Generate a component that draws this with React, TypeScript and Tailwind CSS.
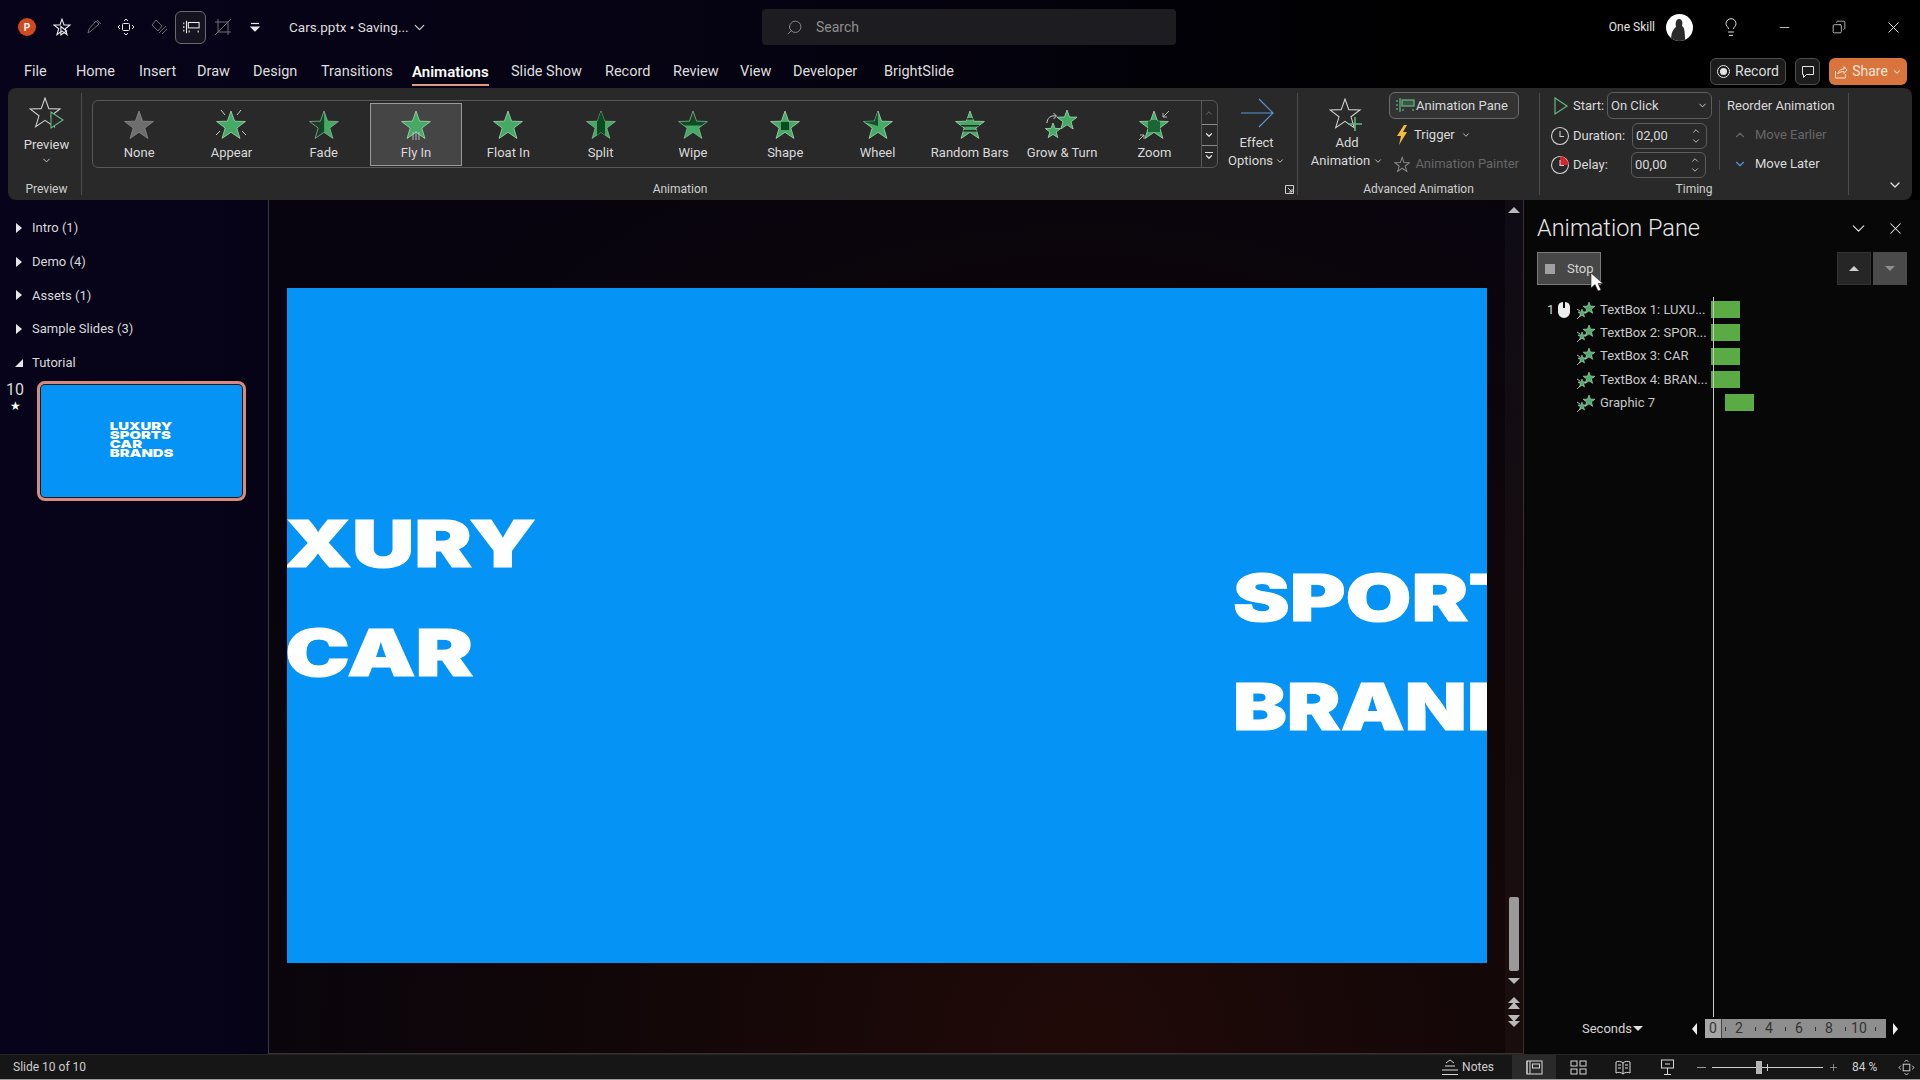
import React from 'react';
import { ChevronDown, ChevronUp, Lightbulb, Minus, Search, Copy, X, Plus } from 'lucide-react';

const tabs = [
  { label: 'File', w: 'w-[52px]' },
  { label: 'Home', w: 'w-[63px]' },
  { label: 'Insert', w: 'w-[58px]' },
  { label: 'Draw', w: 'w-[56px]' },
  { label: 'Design', w: 'w-[68px]' },
  { label: 'Transitions', w: 'w-[91px]' },
  { label: 'Animations', w: 'w-[99px]', active: true },
  { label: 'Slide Show', w: 'w-[94px]' },
  { label: 'Record', w: 'w-[68px]' },
  { label: 'Review', w: 'w-[67px]' },
  { label: 'View', w: 'w-[53px]' },
  { label: 'Developer', w: 'w-[91px]' },
  { label: 'BrightSlide', w: 'w-[80px]' },
];

const STAR = '16,2 19.6,12.2 30.4,12.5 21.8,19 24.9,29.4 16,23.3 7.1,29.4 10.2,19 1.6,12.5 12.4,12.2';

const gallery = [
  { label: 'None', kind: 'none' },
  { label: 'Appear', kind: 'appear' },
  { label: 'Fade', kind: 'fade' },
  { label: 'Fly In', kind: 'fly', selected: true },
  { label: 'Float In', kind: 'float' },
  { label: 'Split', kind: 'split' },
  { label: 'Wipe', kind: 'wipe' },
  { label: 'Shape', kind: 'shape' },
  { label: 'Wheel', kind: 'wheel' },
  { label: 'Random Bars', kind: 'bars' },
  { label: 'Grow & Turn', kind: 'grow' },
  { label: 'Zoom', kind: 'zoom' },
];

const StarIcon = ({ kind }: { kind: string }) => {
  const clip = `clip-${kind}`;
  if (kind === 'grow') {
    return (
      <svg width="38" height="32" viewBox="0 0 38 32" fill="none">
        <polygon points="24,1 26.5,8 34,8.2 28,12.8 30.2,20 24,15.8 17.8,20 20,12.8 14,8.2 21.5,8" fill="#47a966" stroke="#a5dcb2" strokeWidth="0.8" />
        <polygon points="10,14 12,19.4 17.6,19.6 13.2,23 14.8,28.6 10,25.4 5.2,28.6 6.8,23 2.4,19.6 8,19.4" fill="#47a966" stroke="#a5dcb2" strokeWidth="0.8" />
        <path d="M4 14c0-5 4-8 9-7M10.500 4l3 3-3 3" stroke="#cfcfcf" strokeWidth="1" />
      </svg>
    );
  }
  return (
    <svg width="32" height="32" viewBox="0 0 32 32" fill="none">
      <defs>
        <clipPath id={clip}><polygon points={STAR} /></clipPath>
        <linearGradient id={`${clip}-h`} x1="0" x2="1" y1="0" y2="0">
          <stop offset="0" stopColor="#2a2f2b" />
          <stop offset="0.3" stopColor="#1f3a28" />
          <stop offset="0.5" stopColor="#0b4f22" />
          <stop offset="0.52" stopColor="#47a966" />
        </linearGradient>
        <linearGradient id={`${clip}-v`} x1="0" x2="0" y1="0" y2="1">
          <stop offset="0" stopColor="#2a2f2b" />
          <stop offset="0.5" stopColor="#0b4f22" />
          <stop offset="0.56" stopColor="#47a966" />
        </linearGradient>
      </defs>
      <polygon
        points={STAR}
        fill={kind === 'none' ? '#6e6e6e' : kind === 'fade' ? `url(#${clip}-h)` : kind === 'wipe' ? `url(#${clip}-v)` : '#47a966'}
        stroke={kind === 'none' ? '#8a8a8a' : kind === 'fade' || kind === 'wipe' || kind === 'split' ? '#7fb890' : '#a5dcb2'}
        strokeWidth="0.8"
      />
      <g clipPath={`url(#${clip})`}>
        {kind === 'split' && <rect x="12" y="0" width="8" height="32" fill="#0c4a22" />}
        {kind === 'shape' && <rect x="12" y="13" width="8" height="8" fill="#0c4a22" />}
        {kind === 'wheel' && <polygon points="16,17 16,0 4,6 2,13" fill="#16502b" />}
        {kind === 'zoom' && <rect x="10" y="11" width="12" height="12" fill="#1c6636" />}
        {kind === 'bars' && (
          <g fill="#2a2a2a">
            <rect x="0" y="9" width="32" height="1.600" />
            <rect x="0" y="16" width="32" height="1.600" />
            <rect x="0" y="21" width="32" height="1.600" />
          </g>
        )}
      </g>
      {kind === 'appear' && (
        <path d="M6 1l4 5M26 1l-4 5M1 26l4-4M31 26l-4-4" stroke="#c8c8c8" strokeWidth="1" />
      )}
      {kind === 'fly' && (
        <path d="M13 23v8M16 22v9M19 23v8" stroke="#c8c8c8" strokeWidth="0.9" />
      )}
      {kind === 'zoom' && (
        <path d="M31 2l-6 6M25 4v4h4M1 31l5-5M6 30v-4H2" stroke="#c8c8c8" strokeWidth="0.9" />
      )}
    </svg>
  );
};

// small twin stars beside each row of the pane
const PaneStar = () => (
  <svg width="20" height="20" viewBox="0 0 20 20" fill="none">
    <polygon points="13,2 14.500,6 19,6.200 15.500,9 16.700,13.400 13,10.900 9.300,13.400 10.500,9 7,6.200 11.500,6" fill="#4fae70" stroke="#bfe6c9" strokeWidth="0.5" />
    <polygon points="6,9 7,11.800 10,12 7.700,13.800 8.500,17 6,15.200 3.500,17 4.300,13.800 2,12 5,11.800" fill="#4fae70" stroke="#bfe6c9" strokeWidth="0.5" />
    <path d="M1 19l3-3M4 11L1 9" stroke="#d8d8d8" strokeWidth="0.8" />
  </svg>
);

const OutlineStar = ({ children }: { children: React.ReactNode }) => (
  <svg width="36" height="34" viewBox="0 0 36 34" fill="none" stroke="#cfcfcf" strokeWidth="1.100">
    <polygon points="16,1 19.800,11.600 31,11.900 22,18.800 25.300,29.600 16,23.300 6.700,29.600 10,18.800 1,11.900 12.200,11.600" />
    {children}
  </svg>
);

const AnimPaneGlyph = () => (
  <svg width="20" height="16" viewBox="0 0 20 16" fill="none" stroke="#63b981" strokeWidth="1.200">
    <path d="M2 3v2M2 7v2M2 11v2M5 1v14" />
    <rect x="7" y="3" width="12" height="6" fill="#63b981" fillOpacity="0.25" />
    <path d="M8 12v2M18 12v2" />
  </svg>
);

const Spin = () => (
  <div className="flex flex-col items-center text-[#d0d0d0]">
    <ChevronUp size={10} strokeWidth={2} />
    <ChevronDown size={10} strokeWidth={2} />
  </div>
);

const Separator = () => <div className="w-px h-[102px] mt-[5px] bg-[#4b4b4b] shrink-0" />;

const GroupLabel = ({ children, className }: { children: React.ReactNode; className?: string }) => (
  <div className={`h-[22px] flex items-center justify-center text-[12px] text-[#cfcfcf] ${className ?? ''}`}>{children}</div>
);

const Ribbon = () => (
  <div className="mx-2 h-[112px] rounded-lg bg-[#292929] flex text-[13px] text-[#dadada] shrink-0">
    {/* Preview */}
    <div className="w-[73px] pl-[4px] flex flex-col shrink-0">
      <div className="h-[90px] flex flex-col items-center pt-[9px]">
        <svg width="36" height="34" viewBox="0 0 36 34" fill="none" stroke="#cfcfcf" strokeWidth="1.100">
          <polygon points="16,1 19.800,11.600 31,11.900 22,18.800 25.300,29.600 16,23.300 6.700,29.600 10,18.800 1,11.900 12.200,11.600" />
          <polygon points="22,15 34,23 22,31" fill="#292929" stroke="#63b981" />
        </svg>
        <span className="leading-[18px] mt-[5px]">Preview</span>
        <ChevronDown size={11} className="mt-[1px]" />
      </div>
      <GroupLabel>Preview</GroupLabel>
    </div>
    <Separator />

    {/* Animation */}
    <div className="w-[1215px] flex flex-col shrink-0 relative">
      <div className="h-[90px] flex pt-[12px]">
        <div className="ml-[10px] h-[68px] flex border border-[#585858] rounded-md">
          {gallery.map((g) => (
            <div
              key={g.label}
              className={
                g.selected
                  ? 'w-[92.300px] flex flex-col items-center pt-[5px] mt-[2px] h-[63px] bg-[#454545] border border-[#9a9a9a]'
                  : 'w-[92.300px] flex flex-col items-center pt-[6px] mt-[2px] h-[63px]'
              }
            >
              <div className="h-[32px] flex items-center justify-center"><StarIcon kind={g.kind} /></div>
              <span className="leading-[18px] mt-[3px] whitespace-nowrap text-[13px]">{g.label}</span>
            </div>
          ))}
          <div className="w-[16px] flex flex-col border-l border-[#585858] text-[#777]">
            <div className="h-[23px] flex items-center justify-center"><ChevronUp size={10} /></div>
            <div className="h-[22px] flex items-center justify-center border-y border-[#8a8a8a] text-[#dcdcdc]"><ChevronDown size={10} strokeWidth={3} /></div>
            <div className="flex-1 flex flex-col items-center justify-center text-[#dcdcdc]">
              <div className="w-[8px] h-px bg-[#dcdcdc] mb-[1px]" />
              <ChevronDown size={10} strokeWidth={3} className="-mt-[2px]" />
            </div>
          </div>
        </div>
        <div className="w-[74px] flex flex-col items-center -mt-[2px] ml-[2px]">
          <svg width="34" height="30" viewBox="0 0 34 30" fill="none" stroke="#5a97d6" strokeWidth="1.200">
            <path d="M1 15h32M19 1l14 14-14 14" />
          </svg>
          <span className="leading-[18px] mt-[6px]">Effect</span>
          <span className="leading-[18px] flex items-center gap-[2px]">Options <ChevronDown size={10} /></span>
        </div>
      </div>
      <GroupLabel className="pr-[19px]">Animation</GroupLabel>
      <svg className="absolute right-[3px] bottom-[6px]" width="9" height="9" viewBox="0 0 9 9" fill="none" stroke="#cfcfcf">
        <path d="M.5 8.500v-8h8v8zM3 3l4 4M7 4v3H4" />
      </svg>
    </div>
    <Separator />

    {/* Advanced Animation */}
    <div className="w-[241px] flex flex-col shrink-0">
      <div className="h-[90px] flex">
        <div className="w-[91px] pl-[7px] flex flex-col items-center pt-[10px] shrink-0">
          <OutlineStar>
            <path d="M19 26h14M26 19v14" stroke="#63b981" strokeWidth="1.500" />
          </OutlineStar>
          <span className="leading-[18px] mt-[2px]">Add</span>
          <span className="leading-[18px] flex items-center gap-[3px] whitespace-nowrap">Animation <ChevronDown size={10} /></span>
        </div>
        <div className="w-[130px] pt-[4px] flex flex-col shrink-0">
          <div className="h-[27px] flex items-center gap-[1px] pl-[5px] border border-[#6c6c6c] rounded-md bg-[#333333] whitespace-nowrap">
            <AnimPaneGlyph />Animation Pane
          </div>
          <div className="h-[32px] flex items-center gap-[6px] pl-[7px]">
            <svg width="12" height="20" viewBox="0 0 12 20" fill="#f3bd3f"><polygon points="8,0 1,11 5,11 3,20 11,7 7,7 11,0" /></svg>
            Trigger <ChevronDown size={10} />
          </div>
          <div className="h-[28px] flex items-center gap-[5px] pl-[5px] text-[#676767] whitespace-nowrap">
            <svg width="17" height="17" viewBox="0 0 32 32" fill="none" stroke="#8a8a8a" strokeWidth="2"><polygon points={STAR} /></svg>
            Animation Painter
          </div>
        </div>
      </div>
      <GroupLabel>Advanced Animation</GroupLabel>
    </div>
    <Separator />

    {/* Timing */}
    <div className="w-[308px] flex flex-col shrink-0">
      <div className="h-[90px] flex">
        <div className="w-[179px] pt-[4px] pl-[10px] flex flex-col shrink-0">
          <div className="h-[27px] flex items-center">
            <svg className="w-[20px]" width="20" height="20" viewBox="0 0 20 20" fill="none" stroke="#63b981" strokeWidth="1.200"><path d="M5 2l12 8-12 8z" /></svg>
            <span className="ml-[3px] w-[34px]">Start:</span>
            <div className="w-[105px] h-[27px] flex items-center justify-between px-[3px] border border-[#5c5c5c] rounded-md">On Click <ChevronDown size={11} /></div>
          </div>
          <div className="h-[26px] mt-[4px] flex items-center">
            <svg width="20" height="20" viewBox="0 0 20 20" fill="none" stroke="#cfcfcf" strokeWidth="1.100"><circle cx="10" cy="10" r="8.500" /><path d="M10 5v5.500h4" /></svg>
            <span className="ml-[3px] w-[59px]">Duration:</span>
            <div className="w-[75px] h-[26px] flex items-center justify-between pl-[3px] pr-[5px] border border-[#5c5c5c] rounded-md">02,00 <Spin /></div>
          </div>
          <div className="h-[26px] mt-[3px] flex items-center">
            <svg width="20" height="20" viewBox="0 0 20 20" fill="none" stroke="#cfcfcf" strokeWidth="1.100"><circle cx="10" cy="10" r="8.500" /><path d="M10 10V1.500a8.500 8.500 0 0 1 8.500 8.500z" fill="#d8232a" stroke="none" /><path d="M10 5v5.500h4" /></svg>
            <span className="ml-[3px] w-[58px]">Delay:</span>
            <div className="w-[75px] h-[26px] flex items-center justify-between pl-[3px] pr-[5px] border border-[#5c5c5c] rounded-md">00,00 <Spin /></div>
          </div>
        </div>
        <div className="w-px h-[70px] mt-[12px] bg-[#4b4b4b] shrink-0" />
        <div className="pl-[7px] pt-[9px] flex flex-col whitespace-nowrap">
          <div className="h-[18px] flex items-center">Reorder Animation</div>
          <div className="h-[30px] mt-[6px] flex items-center gap-[8px] pl-[6px] text-[#676767]"><ChevronUp size={14} />Move Earlier</div>
          <div className="h-[30px] mt-[1px] flex items-center gap-[8px] pl-[6px]"><ChevronDown size={14} className="text-[#5a97d6]" />Move Later</div>
        </div>
      </div>
      <GroupLabel>Timing</GroupLabel>
    </div>
    <Separator />
    <div className="flex-1 flex items-end justify-end pr-[9px] pb-[7px]"><ChevronDown size={16} /></div>
  </div>
);

const Header = () => (
  <>
    <div className="h-[54px] flex items-center shrink-0">
      <div className="w-[762px] flex items-center shrink-0 pl-[18px]">
        <div className="w-[18px] h-[18px] rounded-full bg-[#d2491f] flex items-center justify-center text-[10px] font-bold text-white shrink-0">P</div>
        <div className="ml-[10px] flex items-center">
          <div className="w-[32px] h-[33px] flex items-center justify-center text-[#e8e8e8]">
            <svg width="18" height="18" viewBox="0 0 32 32" fill="none" stroke="currentColor" strokeWidth="2"><polygon points={STAR} /><path d="M14 15l10 8-10 7z" /></svg>
          </div>
          <div className="w-[32px] h-[33px] flex items-center justify-center">
            <svg width="18" height="18" viewBox="0 0 18 18" fill="none" stroke="#6e6e6e"><path d="M3 15l1-4 7-8 3 3-8 7zM12 2l4 4" /></svg>
          </div>
          <div className="w-[32px] h-[33px] flex items-center justify-center">
            <svg width="18" height="18" viewBox="0 0 18 18" fill="none" stroke="#e8e8e8"><rect x="5.500" y="5.500" width="7" height="7" rx="1" /><path d="M7 3l2-2 2 2M7 15l2 2 2-2M3 7L1 9l2 2M15 7l2 2-2 2" /></svg>
          </div>
          <div className="w-[33px] h-[33px] flex items-center justify-center">
            <svg width="18" height="18" viewBox="0 0 18 18" fill="none" stroke="#6e6e6e"><path d="M2 7l4-5 6 6-4 5zM9 15l7-7M12 16l5-5" /></svg>
          </div>
          <div className="w-[31px] h-[33px] flex items-center justify-center border border-[#6a6a6a] rounded-md bg-[#15131f]">
            <svg width="18" height="16" viewBox="0 0 20 16" fill="none" stroke="#e8e8e8" strokeWidth="1.200"><path d="M2 3v2M2 7v2M2 11v2M5 1v14" /><rect x="7" y="3" width="12" height="6" /><path d="M8 12v2M18 12v2" /></svg>
          </div>
          <div className="w-[33px] h-[33px] flex items-center justify-center">
            <svg width="18" height="18" viewBox="0 0 18 18" fill="none" stroke="#6e6e6e"><path d="M4 1v13h13M1 4h13v13M1 17L17 1" /></svg>
          </div>
          <div className="w-[32px] h-[33px] flex items-center justify-center">
            <svg width="10" height="10" viewBox="0 0 10 10" fill="none" stroke="#e8e8e8" strokeWidth="1.200"><path d="M1 1.500h8" /><path d="M1 5h8L5 9z" fill="#e8e8e8" /></svg>
          </div>
        </div>
        <div className="ml-[18px] flex items-center gap-[2px] text-[13.500px] text-[#dedede] whitespace-nowrap">
          Cars.pptx&nbsp;•&nbsp;Saving... <ChevronDown size={17} strokeWidth={1.500} />
        </div>
      </div>
      <div className="w-[414px] h-[36px] rounded-[4px] bg-[#1d1c20] flex items-center pl-[24px] gap-[13px] text-[14px] text-[#8f8f8f] shrink-0">
        <Search size={17} strokeWidth={1.300} className="-scale-x-100" />Search
      </div>
      <div className="flex-1 flex items-center justify-end text-[#e4e4e4]">
        <span className="text-[12px] whitespace-nowrap">One Skill</span>
        <div className="ml-[11px] w-[27px] h-[27px] rounded-full bg-white overflow-hidden">
          <svg width="27" height="27" viewBox="0 0 27 27"><path d="M5 27c0-8 2-12 5-14-1-4 0-8 3-8s4 3 3 7c2 1 3 4 3 15z" fill="#2a2a2a" /></svg>
        </div>
        <Lightbulb size={20} strokeWidth={1.200} className="ml-[28px]" />
        <Minus size={15} strokeWidth={1.300} className="ml-[36px]" />
        <Copy size={14} strokeWidth={1.300} className="ml-[40px] -scale-x-100" />
        <X size={19} strokeWidth={1.200} className="ml-[38px] mr-[17px]" />
      </div>
    </div>
    <div className="h-[34px] flex pl-[24px] pr-[13px] pt-[2px] items-center text-[14.500px] text-[#dedede] shrink-0">
      {tabs.map((t) => (
        <div key={t.label} className={`${t.w} shrink-0 whitespace-nowrap`}>
          <span className={t.active ? 'inline-block text-[15px] font-semibold text-white border-b-2 border-[#dd9a80] pb-[1px] mt-[3px]' : ''}>{t.label}</span>
        </div>
      ))}
      <div className="ml-auto flex items-center h-[27px] text-[14px] -mt-[1px]">
        <div className="w-[76px] h-[27px] flex items-center justify-center gap-[5px] border border-[#4e4e4e] rounded-md bg-[#1c1c1c]">
          <span className="w-[13px] h-[13px] rounded-full border border-[#e4e4e4] flex items-center justify-center"><span className="w-[7px] h-[7px] rounded-full bg-[#e4e4e4]" /></span>
          Record
        </div>
        <div className="ml-[9px] w-[25px] h-[27px] flex items-center justify-center border border-[#4e4e4e] rounded-md bg-[#1c1c1c]">
          <svg width="14" height="14" viewBox="0 0 14 14" fill="none" stroke="#e4e4e4"><path d="M1.500 1.500h11v8h-7l-3 3v-3h-1z" /></svg>
        </div>
        <div className="ml-[9px] w-[78px] h-[27px] flex items-center justify-center gap-[4px] rounded-md bg-[#d9743c] text-[#f7e4d8]">
          <svg width="14" height="14" viewBox="0 0 14 14" fill="none" stroke="#f7e4d8"><path d="M1.500 6v7h10V9M4 9c0-3 3-5 6-5V1.500L13 5l-3 3.500V6.500C8 6.500 5.500 7 4 9z" /></svg>
          Share <ChevronDown size={10} strokeWidth={2.500} />
        </div>
      </div>
    </div>
  </>
);

const sections = ['Intro (1)', 'Demo (4)', 'Assets (1)', 'Sample Slides (3)'];

const Sidebar = () => (
  <div className="w-[269px] shrink-0 border-r border-[#3a3a44] text-[13px] text-[#d8d8d8] pt-[11px]">
    {sections.map((s) => (
      <div key={s} className="h-[33.750px] flex items-center pl-[16px]">
        <div className="w-0 h-0 border-y-[5px] border-y-transparent border-l-[6px] border-l-[#e6e6e6]" />
        <span className="ml-[10px]">{s}</span>
      </div>
    ))}
    <div className="h-[34px] flex items-center pl-[15px]">
      <svg width="8" height="8" viewBox="0 0 8 8" fill="#e6e6e6"><polygon points="8,0 8,8 0,8" /></svg>
      <span className="ml-[9px]">Tutorial</span>
    </div>
    <div className="flex mt-[1px]">
      <div className="w-[37px] shrink-0 flex flex-col items-center pl-[1px] pr-[8px]">
        <span className="text-[16px] leading-[18px]">10</span>
        <span className="text-[12px] leading-[14px] text-white">★</span>
      </div>
      <div className="w-[209px] h-[120px] rounded-lg border-[3px] border-[#d98a7e] bg-[#1a1a1a] p-px">
        <div className="w-full h-full rounded-[4px] bg-[#0693f6] flex items-center justify-center">
          <div className="text-white font-['Inter',sans-serif] font-black text-[11px] leading-[9px] scale-x-[1.35] -translate-y-[1px]">
            LUXURY<br />SPORTS<br />CAR<br />BRANDS
          </div>
        </div>
      </div>
    </div>
  </div>
);

const Canvas = () => (
  <div className="flex-1 flex border-b border-r border-[#3a3030] bg-[radial-gradient(ellipse_at_65%_100%,#200a08_0%,#100608_45%,#07040f_85%)]">
    <div className="flex-1 pt-[88px] pl-[18px]">
      <div className="w-[1200px] h-[675px] bg-[#0693f6] relative overflow-hidden text-white font-['Inter',sans-serif] font-black text-[64px] leading-[65px] whitespace-nowrap [-webkit-text-stroke:1px_white]">
        <div className="absolute right-[951px] top-[223px] origin-right scale-x-[1.35]">LUXURY</div>
        <div className="absolute right-[1014px] top-[332px] origin-right scale-x-[1.35]">CAR</div>
        <div className="absolute left-[946px] top-[277px] origin-left scale-x-[1.33]">SPORTS</div>
        <div className="absolute left-[946px] top-[386px] origin-left scale-x-[1.26]">BRANDS</div>
      </div>
    </div>
    <div className="w-[18px] shrink-0 flex flex-col items-center pt-[7px] bg-white/[0.03]">
      <div className="w-0 h-0 border-x-[6px] border-x-transparent border-b-[6px] border-b-[#b9b9b9]" />
      <div className="w-[10px] h-[74px] mt-[684px] rounded-[2px] bg-[#9a9a9a]" />
      <div className="w-0 h-0 mt-[7px] border-x-[6px] border-x-transparent border-t-[6px] border-t-[#b9b9b9]" />
      <div className="mt-[13px] flex flex-col items-center">
        <div className="w-0 h-0 border-x-[6px] border-x-transparent border-b-[6px] border-b-[#b9b9b9]" />
        <div className="w-0 h-0 -mt-[1px] border-x-[6px] border-x-transparent border-b-[7px] border-b-[#b9b9b9]" />
      </div>
      <div className="mt-[6px] flex flex-col items-center">
        <div className="w-0 h-0 border-x-[6px] border-x-transparent border-t-[7px] border-t-[#b9b9b9]" />
        <div className="w-0 h-0 -mt-[1px] border-x-[6px] border-x-transparent border-t-[6px] border-t-[#b9b9b9]" />
      </div>
    </div>
  </div>
);

const rows = [
  { name: 'TextBox 1: LUXU...', bar: 'ml-0', first: true },
  { name: 'TextBox 2: SPOR...', bar: 'ml-0' },
  { name: 'TextBox 3: CAR', bar: 'ml-0' },
  { name: 'TextBox 4: BRAN...', bar: 'ml-0' },
  { name: 'Graphic 7', bar: 'ml-[14px]' },
];

const ticks = ['2', '4', '6', '8', '10'];

const AnimationPane = () => (
  <div className="w-[396px] shrink-0 bg-[#070707] relative flex flex-col text-[13px] text-[#c9c9c9]">
    <div className="h-[52px] flex items-center pl-[13px] pr-[15px] pt-[5px] shrink-0">
      <span className="text-[23.500px] font-light text-[#e6e6e6]">Animation Pane</span>
      <ChevronDown size={21} strokeWidth={1.300} className="ml-auto text-[#e6e6e6]" />
      <X size={19} strokeWidth={1.300} className="ml-[17px] text-[#e6e6e6]" />
    </div>
    <div className="h-[33px] flex pl-[13px] pr-[13px] shrink-0 gap-[2px]">
      <div className="relative w-[64px] flex items-center bg-[#474747] border border-[#7a7a7a] pl-[7px]">
        <span className="w-[10px] h-[10px] bg-[#a0a0a0]" />
        <span className="ml-[12px] text-[#d4d4d4]">Stop</span>
        <svg className="absolute left-[52px] top-[19px]" width="15" height="20" viewBox="0 0 15 20"><polygon points="1,1 1,16 5,12.500 8,19 11,18 8,11.500 13,11.500" fill="white" stroke="#222" strokeWidth="0.600" /></svg>
      </div>
      <div className="ml-auto w-[34px] flex items-center justify-center bg-[#262626] border border-[#333]">
        <div className="w-0 h-0 border-x-[5px] border-x-transparent border-b-[5px] border-b-[#cfcfcf]" />
      </div>
      <div className="w-[34px] flex items-center justify-center bg-[#4a4a4a]">
        <div className="w-0 h-0 border-x-[5px] border-x-transparent border-t-[5px] border-t-[#8e8e8e]" />
      </div>
    </div>
    <div className="pt-[13px] pl-[23px] flex flex-col shrink-0">
      {rows.map((r) => (
        <div key={r.name} className="h-[23.300px] flex items-center">
          <span className="w-[11px] text-[#d4d4d4]">{r.first ? '1' : ''}</span>
          <span className="w-[18px] flex items-center">
            {r.first && (
              <svg width="12" height="16" viewBox="0 0 12 16"><path d="M0 5a6 5 0 0 1 5-5v6h2V0a6 5 0 0 1 5 5v5a6 6 0 0 1-12 0z" fill="#ececec" /></svg>
            )}
          </span>
          <span className="w-[24px] flex items-center"><PaneStar /></span>
          <span className="w-[111px] whitespace-nowrap">{r.name}</span>
          <div className={`${r.bar} w-[29px] h-[17px] bg-[#5bab45]`} />
        </div>
      ))}
    </div>
    <div className="absolute left-[189px] top-[97px] w-px h-[720px] bg-[#c8c8c8]" />
    <div className="mt-auto mb-[16px] h-[19px] flex items-center pl-[58px]">
      <span className="text-[#d4d4d4] w-[51px]">Seconds</span>
      <div className="w-0 h-0 border-x-[5px] border-x-transparent border-t-[5px] border-t-[#e0e0e0]" />
      <div className="ml-[49px] w-0 h-0 border-y-[6px] border-y-transparent border-r-[5px] border-r-[#eeeeee]" />
      <div className="ml-[8px] w-[181px] h-[19px] bg-[#8e8e8e] flex text-[#333] text-[14px] overflow-hidden">
        <div className="w-[17px] bg-[#a6a6a6] border-r border-[#444] flex items-center justify-center">0</div>
        {ticks.map((t) => (
          <div key={t} className="w-[30px] flex items-center shrink-0">
            <span className="ml-[3px] w-px h-[4px] bg-[#333]" />
            <span className="w-[28px] text-center">{t}</span>
          </div>
        ))}
        <span className="ml-[3px] w-px h-[4px] bg-[#333] self-center" />
      </div>
      <div className="ml-[7px] w-0 h-0 border-y-[6px] border-y-transparent border-l-[5px] border-l-[#eeeeee]" />
    </div>
  </div>
);

const StatusBar = () => (
  <div className="h-[26px] shrink-0 bg-[#161616] border-t border-[#262626] border-b border-b-[#9a9a9a] flex items-center text-[12px] text-[#cfcfcf]">
    <span className="pl-[13px]">Slide 10 of 10</span>
    <div className="ml-auto flex items-center h-full">
      <svg width="18" height="17" viewBox="0 0 18 17" fill="none" stroke="#d8d8d8"><path d="M5 4l4-3 4 3M4 7h10M1 11h16M1 15.500h16" /></svg>
      <span className="ml-[3px] mr-[18px]">Notes</span>
      <div className="w-[44px] h-full bg-[#2a2a2a] flex items-center justify-center">
        <svg width="17" height="15" viewBox="0 0 17 15" fill="none" stroke="#d8d8d8"><rect x="1" y="1" width="15" height="13" /><path d="M1 1v13M4 1v13" /><rect x="6.500" y="4" width="7" height="4" /></svg>
      </div>
      <div className="w-[44px] flex justify-center">
        <svg width="17" height="15" viewBox="0 0 17 15" fill="none" stroke="#d8d8d8"><rect x="1" y="1" width="6" height="5" /><rect x="10" y="1" width="6" height="5" /><rect x="1" y="9" width="6" height="5" /><rect x="10" y="9" width="6" height="5" /></svg>
      </div>
      <div className="w-[45px] flex justify-center">
        <svg width="16" height="15" viewBox="0 0 16 15" fill="none" stroke="#d8d8d8"><path d="M8 3C6 1 3 1 1 2v11c2-1 5-1 7 1 2-2 5-2 7-1V2c-2-1-5-1-7 1zM8 3v11M3 5h3M3 8h3M10 5h3M10 8h3" /></svg>
      </div>
      <div className="w-[45px] flex justify-center">
        <svg width="15" height="17" viewBox="0 0 15 17" fill="none" stroke="#d8d8d8"><rect x="1.500" y="1" width="12" height="8" /><path d="M7.500 9v6M4 15.500h7M5 5h5" /></svg>
      </div>
      <span className="ml-[7px] w-[9px] h-px bg-[#9a9a9a]" />
      <div className="ml-[6px] w-[111px] h-px bg-[#cfcfcf] relative">
        <div className="absolute left-[44px] -top-[6px] w-[6px] h-[13px] bg-[#b5b5b5]" />
        <div className="absolute left-[55px] -top-[3px] w-px h-[7px] bg-[#cfcfcf]" />
      </div>
      <Plus size={11} strokeWidth={1.200} className="ml-[5px]" />
      <span className="ml-[13px] w-[36px] text-[#cfcfcf]">84 %</span>
      <svg className="ml-[10px] mr-[5px]" width="17" height="17" viewBox="0 0 18 18" fill="none" stroke="#d8d8d8"><rect x="5.500" y="5.500" width="7" height="7" /><path d="M7 3l2-2 2 2M7 15l2 2 2-2M3 7L1 9l2 2M15 7l2 2-2 2" /></svg>
    </div>
  </div>
);

export default function App() {
  return (
    <div className="w-[1920px] h-[1080px] flex flex-col overflow-hidden font-['Roboto',sans-serif] text-white bg-[linear-gradient(90deg,#07031a_0%,#050210_45%,#000000_75%)]">
      <Header />
      <Ribbon />
      <div className="flex-1 flex min-h-0">
        <Sidebar />
        <Canvas />
        <AnimationPane />
      </div>
      <StatusBar />
    </div>
  );
}
